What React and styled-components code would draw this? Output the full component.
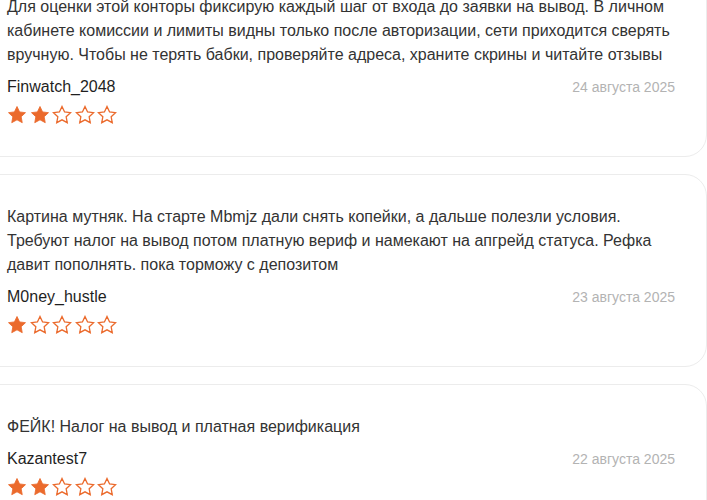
import React from "react";
import styled, { createGlobalStyle } from "styled-components";

const GlobalStyle = createGlobalStyle`
  html, body {
    margin: 0;
    padding: 0;
    background: #ffffff;
    overflow: hidden;
  }
  body {
    font-family: "Liberation Sans", Arial, sans-serif;
  }
`;

// ---------------- Styled Components ---------------- //

const ReviewList = styled.div`
  display: flex;
  flex-direction: column;
  gap: 17px;
  margin: -36px 0 0 -24px;
  width: 731px;
`;

const Card = styled.article`
  background: #ffffff;
  border: 1px solid #ececec;
  border-radius: 22px;
  padding: 30px 31px 30px 30px;
`;

const ReviewText = styled.p`
  margin: 0 0 10px;
  font-size: 16px;
  line-height: 24px;
  color: #333333;
`;

const MetaRow = styled.div`
  display: flex;
  justify-content: space-between;
  align-items: center;
  height: 20px;
`;

const Author = styled.span`
  font-size: 16px;
  color: #1f1f1f;
`;

const DateText = styled.span`
  font-size: 14px;
  color: #b3b3b3;
`;

const Stars = styled.div`
  display: flex;
  gap: 2.5px;
  margin-top: 7px;
  height: 22px;
  align-items: center;
`;

const StarSvg = styled.svg`
  width: 20px;
  height: 20px;
  display: block;
`;

const STAR_POINTS =
  "12,1.8 15.1,8.3 22.2,9.2 17,14.1 18.3,21.2 12,17.8 5.7,21.2 7,14.1 1.8,9.2 8.9,8.3";

const Star = ({ filled }) => (
  <StarSvg viewBox="0 0 24 24">
    <polygon
      points={STAR_POINTS}
      fill={filled ? "#eb6a2c" : "#ffffff"}
      stroke="#eb6a2c"
      strokeWidth={filled ? 1 : 1.6}
      strokeLinejoin="miter"
    />
  </StarSvg>
);

const reviews = [
  {
    text: "Для оценки этой конторы фиксирую каждый шаг от входа до заявки на вывод. В личном кабинете комиссии и лимиты видны только после авторизации, сети приходится сверять вручную. Чтобы не терять бабки, проверяйте адреса, храните скрины и читайте отзывы",
    author: "Finwatch_2048",
    date: "24 августа 2025",
    rating: 2,
  },
  {
    text: "Картина мутняк. На старте Mbmjz дали снять копейки, а дальше полезли условия. Требуют налог на вывод потом платную вериф и намекают на апгрейд статуса. Рефка давит пополнять. пока торможу с депозитом",
    author: "M0ney_hustle",
    date: "23 августа 2025",
    rating: 1,
  },
  {
    text: "ФЕЙК! Налог на вывод и платная верификация",
    author: "Kazantest7",
    date: "22 августа 2025",
    rating: 2,
  },
];

// ---------------- Main Component ---------------- //

const App = () => (
  <>
    <GlobalStyle />
    <ReviewList>
      {reviews.map((r) => (
        <Card key={r.author}>
          <ReviewText>{r.text}</ReviewText>
          <MetaRow>
            <Author>{r.author}</Author>
            <DateText>{r.date}</DateText>
          </MetaRow>
          <Stars>
            {[1, 2, 3, 4, 5].map((n) => (
              <Star key={n} filled={n <= r.rating} />
            ))}
          </Stars>
        </Card>
      ))}
    </ReviewList>
  </>
);

export default App;
